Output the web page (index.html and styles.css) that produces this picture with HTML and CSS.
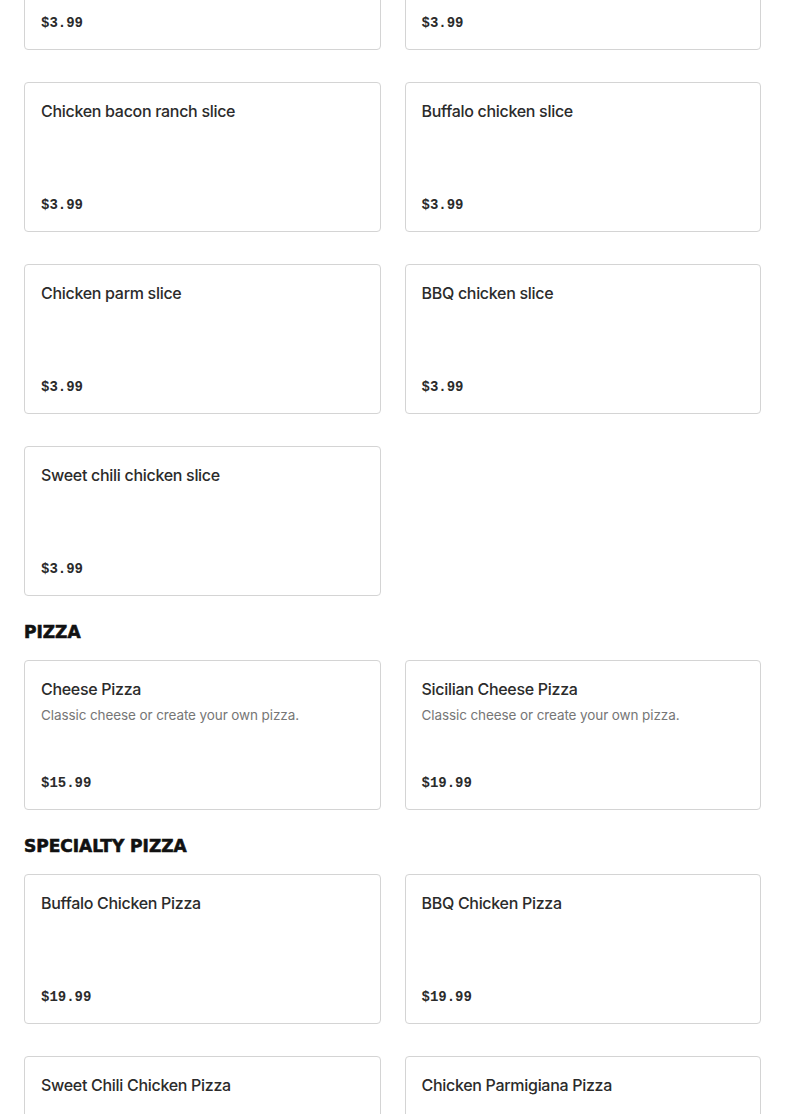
FILE: index.html
```html
<!DOCTYPE html>
<html lang="en">
<head>
  <meta charset="UTF-8">
  <title>Menu</title>
  <link rel="stylesheet" href="styles.css">
</head>
<body>

  <div class="menu">

    <div class="grid">
      <div class="item">
        <div class="item-name">Pepperoni slice</div>
        <div class="item-price">$3.99</div>
      </div>
      <div class="item">
        <div class="item-name">Sausage slice</div>
        <div class="item-price">$3.99</div>
      </div>
      <div class="item">
        <div class="item-name">Chicken bacon ranch slice</div>
        <div class="item-price">$3.99</div>
      </div>
      <div class="item">
        <div class="item-name">Buffalo chicken slice</div>
        <div class="item-price">$3.99</div>
      </div>
      <div class="item">
        <div class="item-name">Chicken parm slice</div>
        <div class="item-price">$3.99</div>
      </div>
      <div class="item">
        <div class="item-name">BBQ chicken slice</div>
        <div class="item-price">$3.99</div>
      </div>
      <div class="item">
        <div class="item-name">Sweet chili chicken slice</div>
        <div class="item-price">$3.99</div>
      </div>
    </div>

    <h2 class="section-title">PIZZA</h2>
    <div class="grid">
      <div class="item">
        <div class="item-name">Cheese Pizza</div>
        <div class="item-desc">Classic cheese or create your own pizza.</div>
        <div class="item-price">$15.99</div>
      </div>
      <div class="item">
        <div class="item-name">Sicilian Cheese Pizza</div>
        <div class="item-desc">Classic cheese or create your own pizza.</div>
        <div class="item-price">$19.99</div>
      </div>
    </div>

    <h2 class="section-title">SPECIALTY PIZZA</h2>
    <div class="grid">
      <div class="item">
        <div class="item-name">Buffalo Chicken Pizza</div>
        <div class="item-price">$19.99</div>
      </div>
      <div class="item">
        <div class="item-name">BBQ Chicken Pizza</div>
        <div class="item-price">$19.99</div>
      </div>
      <div class="item">
        <div class="item-name">Sweet Chili Chicken Pizza</div>
        <div class="item-price">$19.99</div>
      </div>
      <div class="item">
        <div class="item-name">Chicken Parmigiana Pizza</div>
        <div class="item-price">$19.99</div>
      </div>
    </div>

  </div>

</body>
</html>
```

FILE: styles.css
```css
body {
  margin: 0;
  background-color: #fff;
  font-family: 'Inter', 'Liberation Sans', sans-serif;
  color: #2b2b2b;
}

.menu {
  padding: 0 24px;
  margin-top: -100px;
}

.grid {
  display: grid;
  grid-template-columns: repeat(2, 1fr);
  column-gap: 24px;
  row-gap: 32px;
}

.section-title {
  margin: 24px 0 16px;
  font-family: 'DejaVu Sans', sans-serif;
  font-size: 17px;
  font-weight: 900;
  line-height: 24px;
  color: #111;
  -webkit-text-stroke: 0.6px #111;
}

.item {
  display: flex;
  flex-direction: column;
  height: 150px;
  box-sizing: border-box;
  padding: 16px;
  border: 1px solid #d4d4d4;
  border-radius: 4px;
}

.item-name {
  font-size: 16px;
  font-weight: 500;
  line-height: 24px;
  letter-spacing: -0.3px;
}

.item-desc {
  margin-top: 4px;
  font-size: 13.5px;
  line-height: 20px;
  letter-spacing: -0.1px;
  color: #767676;
}

.item-price {
  margin-top: auto;
  font-family: 'Liberation Mono', monospace;
  font-size: 14px;
  font-weight: bold;
  line-height: 20px;
  color: #2b2b2b;
}
```
